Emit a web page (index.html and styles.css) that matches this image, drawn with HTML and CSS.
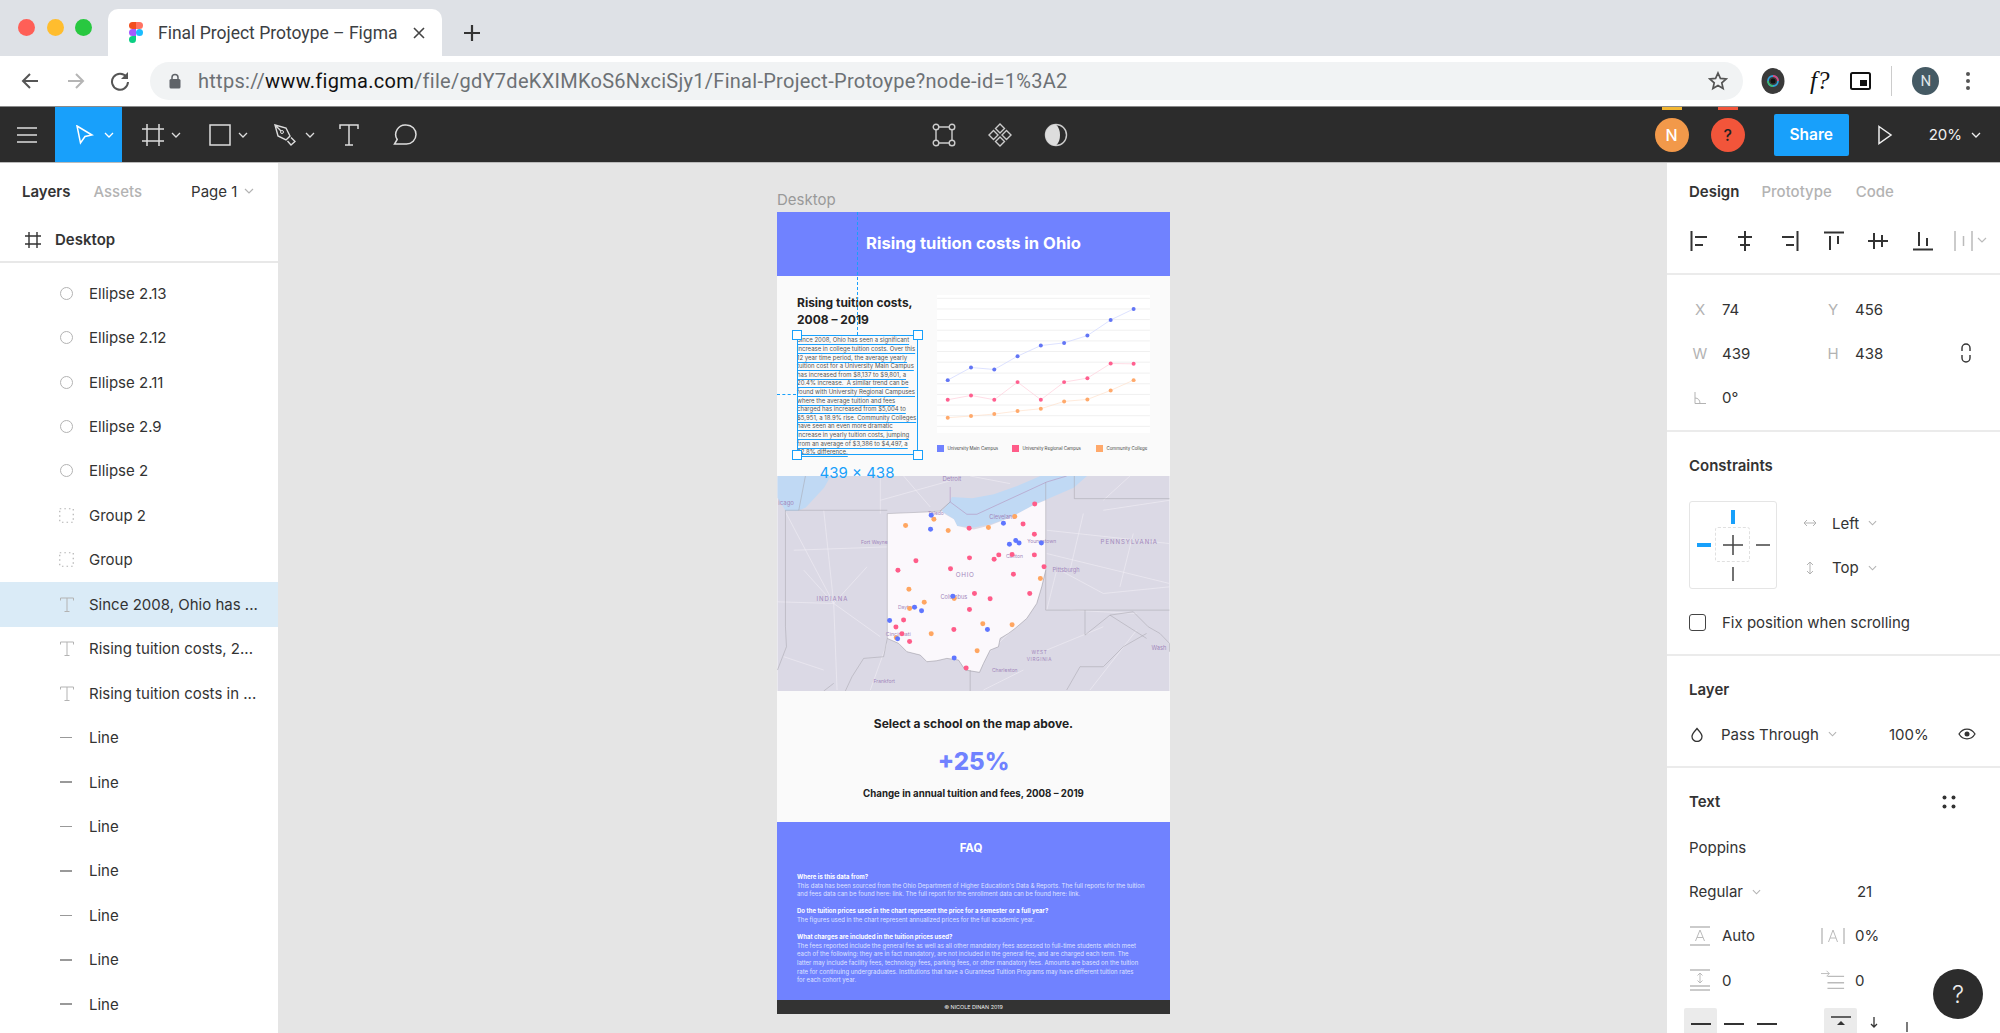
FILE: index.html
```html
<!DOCTYPE html>
<html lang="en">
<head>
<meta charset="UTF-8">
<title>Final Project Protoype – Figma</title>
<link rel="stylesheet" href="styles.css">
</head>
<body>
<div class="window">

<!-- browser tabs -->
<div class="tabstrip">
  <div class="lights"><i class="red"></i><i class="yellow"></i><i class="green"></i></div>
  <div class="tab">
    <svg class="tab-logo" width="14" height="21" viewBox="0 0 14 21">
      <path fill="#f24e1e" d="M7 0H3.5a3.5 3.5 0 0 0 0 7H7z"/><path fill="#ff7262" d="M7 0h3.5a3.5 3.5 0 0 1 0 7H7z"/>
      <path fill="#a259ff" d="M7 7H3.5a3.5 3.5 0 0 0 0 7H7z"/><circle fill="#1abcfe" cx="10.5" cy="10.5" r="3.5"/>
      <path fill="#0acf83" d="M7 14H3.5a3.5 3.5 0 1 0 3.5 3.5z"/>
    </svg>
    <span class="tab-title">Final Project Protoype – Figma</span>
    <svg class="tab-close" width="14" height="14" viewBox="0 0 14 14"><path d="M2 2l10 10M12 2L2 12" stroke="#444" stroke-width="1.6"/></svg>
  </div>
  <svg class="tab-new" width="18" height="18" viewBox="0 0 18 18"><path d="M9 1v16M1 9h16" stroke="#333" stroke-width="2.2"/></svg>
</div>

<!-- address bar -->
<div class="addressbar">
  <svg class="nav-back" width="20" height="20" viewBox="0 0 20 20"><path d="M18 10H3M10 3l-7 7 7 7" fill="none" stroke="#555" stroke-width="2"/></svg>
  <svg class="nav-forward" width="20" height="20" viewBox="0 0 20 20"><path d="M2 10h15M10 3l7 7-7 7" fill="none" stroke="#b5b5b5" stroke-width="2"/></svg>
  <svg class="nav-reload" width="20" height="20" viewBox="0 0 20 20"><path d="M16.5 6A8 8 0 1 0 18 11" fill="none" stroke="#555" stroke-width="2"/><path d="M18 1v7h-7z" fill="#555"/></svg>
  <div class="omnibox">
    <svg width="12" height="16" viewBox="0 0 12 16"><path d="M3 7V4.500a3 3 0 0 1 6 0V7" fill="none" stroke="#5f6368" stroke-width="1.5"/><rect x="0.500" y="6" width="11" height="9.500" rx="1.500" fill="#5f6368"/></svg>
    <span class="url"><span class="url-dim">https://</span>www.figma.com<span class="url-dim">/file/gdY7deKXIMKoS6NxciSjy1/Final-Project-Protoype?node-id=1%3A2</span></span>
    <svg class="star" width="20" height="20" viewBox="0 0 20 20"><path d="M10 2l2.400 5.400 5.800.6-4.400 3.900 1.300 5.700L10 14.600l-5.100 3 1.300-5.700L1.800 8l5.800-.6z" fill="none" stroke="#555" stroke-width="1.700"/></svg>
  </div>
  <svg class="ext-lens" width="24" height="28" viewBox="0 0 24 28"><ellipse cx="12" cy="14" rx="11.500" ry="13" fill="#3a3a3a"/><circle cx="12" cy="14" r="5" fill="none" stroke="#2f9fd8" stroke-width="1.800"/><path d="M12 9a5 5 0 0 1 5 5" fill="none" stroke="#e0457b" stroke-width="1.800"/><path d="M7 14a5 5 0 0 0 5 5" fill="none" stroke="#3dbb6c" stroke-width="1.800"/><circle cx="12" cy="14" r="2.500" fill="#111"/></svg>
  <span class="ext-font">f?</span>
  <svg class="ext-pip" width="21" height="18" viewBox="0 0 21 18"><rect x="1" y="1" width="19" height="16" rx="1.500" fill="none" stroke="#111" stroke-width="2"/><rect x="10" y="8" width="7" height="6" fill="#111"/></svg>
  <span class="bar-sep"></span>
  <span class="profile">N</span>
  <svg class="menu-dots" width="6" height="20" viewBox="0 0 6 20"><circle cx="3" cy="3" r="2" fill="#555"/><circle cx="3" cy="10" r="2" fill="#555"/><circle cx="3" cy="17" r="2" fill="#555"/></svg>
</div>

<!-- figma toolbar -->
<div class="toolbar">
  <div class="tools">
    <div class="tool-menu"><svg width="20" height="16" viewBox="0 0 20 16"><path d="M0 1h20M0 8h20M0 15h20" stroke="#ddd" stroke-width="1.500"/></svg></div>
    <div class="tool tool-active">
      <svg width="19" height="20" viewBox="0 0 19 20"><path d="M2 1l15 9-7 1.500L5.500 18z" fill="none" stroke="#fff" stroke-width="1.500"/></svg>
      <svg class="chev" width="10" height="6" viewBox="0 0 10 6"><path d="M1 1l4 4 4-4" fill="none" stroke="#fff" stroke-width="1.300"/></svg>
    </div>
    <div class="tool">
      <svg width="22" height="22" viewBox="0 0 22 22"><path d="M0 5h22M0 17h22M5 0v22M17 0v22" stroke="#ddd" stroke-width="1.500"/></svg>
      <svg class="chev" width="10" height="6" viewBox="0 0 10 6"><path d="M1 1l4 4 4-4" fill="none" stroke="#ddd" stroke-width="1.300"/></svg>
    </div>
    <div class="tool">
      <svg width="22" height="22" viewBox="0 0 22 22"><rect x="1" y="1" width="20" height="20" fill="none" stroke="#ddd" stroke-width="1.500"/></svg>
      <svg class="chev" width="10" height="6" viewBox="0 0 10 6"><path d="M1 1l4 4 4-4" fill="none" stroke="#ddd" stroke-width="1.300"/></svg>
    </div>
    <div class="tool tool-pen">
      <svg width="22" height="22" viewBox="0 0 22 22"><path d="M1 1l11 3 4 8-4 4-8-4zM1 1l6 6M13.500 17l3.500 4 4-3.500-4-4" fill="none" stroke="#ddd" stroke-width="1.400"/><circle cx="8" cy="8" r="1.500" fill="none" stroke="#ddd"/></svg>
      <svg class="chev" width="10" height="6" viewBox="0 0 10 6"><path d="M1 1l4 4 4-4" fill="none" stroke="#ddd" stroke-width="1.300"/></svg>
    </div>
    <div class="tool-plain">
      <svg width="20" height="22" viewBox="0 0 20 22"><path d="M1 5V1h18v4M10 1v20M6 21h8" fill="none" stroke="#ddd" stroke-width="1.500"/></svg>
    </div>
    <div class="tool-plain tool-comment">
      <svg width="24" height="22" viewBox="0 0 24 22"><path d="M13.500 1a9.500 9.500 0 0 1 0 19H1.500l2.700-4.500A9.500 9.500 0 0 1 13.500 1z" fill="none" stroke="#ddd" stroke-width="1.500"/></svg>
    </div>
  </div>
  <div class="tools-center">
    <svg width="24" height="24" viewBox="0 0 24 24"><path d="M4 4h16v16H4z" fill="none" stroke="#ccc" stroke-width="1.400"/><g fill="#2c2c2c" stroke="#ccc" stroke-width="1.400"><circle cx="4" cy="4" r="2.800"/><circle cx="20" cy="4" r="2.800"/><circle cx="4" cy="20" r="2.800"/><circle cx="20" cy="20" r="2.800"/></g></svg>
    <svg width="24" height="24" viewBox="0 0 24 24"><g fill="none" stroke="#ccc" stroke-width="1.400"><path d="M12 1l4.500 4.500L12 10 7.500 5.500z"/><path d="M12 14l4.500 4.500L12 23l-4.500-4.500z"/><path d="M5.500 7.500L10 12l-4.500 4.500L1 12z"/><path d="M18.500 7.500L23 12l-4.500 4.500L14 12z"/></g></svg>
    <svg width="24" height="24" viewBox="0 0 24 24"><circle cx="12" cy="12" r="10.500" fill="none" stroke="#ccc" stroke-width="1.400"/><path d="M12 1.500a10.500 10.500 0 0 0 0 21c3-3 4-6.500 4-10.500S15 4.500 12 1.500z" fill="#ddd"/></svg>
  </div>
  <div class="tools-right">
    <span class="avatar avatar-n">N</span>
    <span class="avatar avatar-q">?</span>
    <span class="share">Share</span>
    <svg class="play" width="16" height="20" viewBox="0 0 16 20"><path d="M2 1.500L14 10 2 18.500z" fill="none" stroke="#eee" stroke-width="1.500"/></svg>
    <span class="zoom-value">20%</span>
    <svg class="chev" width="10" height="6" viewBox="0 0 10 6"><path d="M1 1l4 4 4-4" fill="none" stroke="#eee" stroke-width="1.300"/></svg>
  </div>
</div>

<div class="workspace">

  <!-- layers panel -->
  <aside class="layers">
    <div class="layer-tabs">
      <span class="tab-on">Layers</span>
      <span class="tab-off">Assets</span>
      <span class="page-pick">Page 1</span>
      <svg width="10" height="6" viewBox="0 0 10 6"><path d="M1 1l4 4 4-4" fill="none" stroke="#b3b3b3" stroke-width="1.200"/></svg>
    </div>
    <div class="layer-frame">
      <svg width="16" height="16" viewBox="0 0 16 16"><path d="M0 4h16M0 12h16M4 0v16M12 0v16" stroke="#333" stroke-width="1.400"/></svg>
      <span>Desktop</span>
    </div>
    <ul class="layer-list">
      <li><i class="ic-ellipse"></i>Ellipse 2.13</li>
      <li><i class="ic-ellipse"></i>Ellipse 2.12</li>
      <li><i class="ic-ellipse"></i>Ellipse 2.11</li>
      <li><i class="ic-ellipse"></i>Ellipse 2.9</li>
      <li><i class="ic-ellipse"></i>Ellipse 2</li>
      <li><svg class="ic-group" width="15" height="15" viewBox="0 0 15 15"><rect x=".75" y=".75" width="13.500" height="13.500" fill="none" stroke="#b3b3b3" stroke-width="1.200" stroke-dasharray="1.500 3.100"/></svg>Group 2</li>
      <li><svg class="ic-group" width="15" height="15" viewBox="0 0 15 15"><rect x=".75" y=".75" width="13.500" height="13.500" fill="none" stroke="#b3b3b3" stroke-width="1.200" stroke-dasharray="1.500 3.100"/></svg>Group</li>
      <li class="layer-selected"><svg class="ic-text" width="14" height="15" viewBox="0 0 14 15"><path d="M.5 3.500V1h13v2.500M7 1v13.500M4.500 14.500h5" fill="none" stroke="#b3b3b3"/></svg>Since 2008, Ohio has ...</li>
      <li><svg class="ic-text" width="14" height="15" viewBox="0 0 14 15"><path d="M.5 3.500V1h13v2.500M7 1v13.500M4.500 14.500h5" fill="none" stroke="#b3b3b3"/></svg>Rising tuition costs, 2...</li>
      <li><svg class="ic-text" width="14" height="15" viewBox="0 0 14 15"><path d="M.5 3.500V1h13v2.500M7 1v13.500M4.500 14.500h5" fill="none" stroke="#b3b3b3"/></svg>Rising tuition costs in ...</li>
      <li><i class="ic-line"></i>Line</li>
      <li><i class="ic-line"></i>Line</li>
      <li><i class="ic-line"></i>Line</li>
      <li><i class="ic-line"></i>Line</li>
      <li><i class="ic-line"></i>Line</li>
      <li><i class="ic-line"></i>Line</li>
      <li><i class="ic-line"></i>Line</li>
    </ul>
  </aside>

  <!-- canvas with the frame -->
  <main class="canvas">
    <div class="frame-label">Desktop</div>
    <div class="frame">
      <header class="frame-head">Rising tuition costs in Ohio</header>

      <section class="intro">
        <div class="intro-text">
          <h2>Rising tuition costs,<br>2008 – 2019</h2>
          <p class="selected-text">
            <span><u>Since 2008, Ohio has seen a significant</u></span>
            <span><u>increase in college tuition costs. Over this</u></span>
            <span><u>12 year time period, the average yearly</u></span>
            <span><u>tuition cost for a University Main Campus</u></span>
            <span><u>has increased from $8,137 to $9,801, a</u></span>
            <span><u>20.4% increase.  A similar trend can be</u></span>
            <span><u>found with University Regional Campuses</u></span>
            <span><u>where the average tuition and fees</u></span>
            <span><u>charged has increased from $5,004 to</u></span>
            <span><u>$5,951, a 18.9% rise. Community Colleges</u></span>
            <span><u>have seen an even more dramatic</u></span>
            <span><u>increase in yearly tuition costs, jumping</u></span>
            <span><u>from an average of $3,386 to $4,497, a</u></span>
            <span><u>32.8% difference.</u></span>
          </p>
        </div>
        <div class="intro-chart">
          <svg width="213" height="138" viewBox="499 315 640 415">
            <rect x="499" y="315" width="640" height="415" fill="#fff"/>
            <path d="M499 325H1139M499 357H1139M499 389H1139M499 421H1139M499 453H1139M499 485H1139M499 517H1139M499 550H1139M499 582H1139M499 614H1139M499 646H1139M499 678H1139M499 710H1139" stroke="#f0f0f0" stroke-width="3"/>
            <polyline fill="none" stroke="#ccd3ff" stroke-width="2" points="531,571 601,533 671,539 741,499 811,467 881,459 951,437 1021,390 1090,357"/>
            <polyline fill="none" stroke="#ffcbd9" stroke-width="2" points="531,630 601,617 671,630 741,577 811,630 881,577 951,565 1021,521 1090,522"/>
            <polyline fill="none" stroke="#ffe0c8" stroke-width="2" points="531,684 601,679 671,673 741,664 811,657 881,635 951,629 1021,602 1090,571"/>
            <g fill="#6275f5"><circle cx="531" cy="571" r="6"/><circle cx="601" cy="533" r="6"/><circle cx="671" cy="539" r="6"/><circle cx="741" cy="499" r="6"/><circle cx="811" cy="467" r="6"/><circle cx="881" cy="459" r="6"/><circle cx="951" cy="437" r="6"/><circle cx="1021" cy="390" r="6"/><circle cx="1090" cy="357" r="6"/></g>
            <g fill="#ff5f8f"><circle cx="531" cy="630" r="6"/><circle cx="601" cy="617" r="6"/><circle cx="671" cy="630" r="6"/><circle cx="741" cy="577" r="6"/><circle cx="811" cy="630" r="6"/><circle cx="881" cy="577" r="6"/><circle cx="951" cy="565" r="6"/><circle cx="1021" cy="521" r="6"/><circle cx="1090" cy="522" r="6"/></g>
            <g fill="#ffa96b"><circle cx="531" cy="684" r="6"/><circle cx="601" cy="679" r="6"/><circle cx="671" cy="673" r="6"/><circle cx="741" cy="664" r="6"/><circle cx="811" cy="657" r="6"/><circle cx="881" cy="635" r="6"/><circle cx="951" cy="629" r="6"/><circle cx="1021" cy="602" r="6"/><circle cx="1090" cy="571" r="6"/></g>
          </svg>
          <div class="legend">
            <span class="legend-item legend-main"><i></i>University Main Campus</span>
            <span class="legend-item legend-regional"><i></i>University Regional Campus</span>
            <span class="legend-item legend-college"><i></i>Community College</span>
          </div>
        </div>
      </section>

      <section class="map">
        <svg width="393" height="215" viewBox="21 17 1178 646">
          <rect x="21" y="17" width="1178" height="646" fill="#dbd9e5"/>
          <!-- lakes -->
          <path fill="#c0d9f4" d="M21 17H181L161 52 106 112 81 122 46 122 21 82z"/>
          <path fill="#c0d9f4" d="M505 132L536 98 545 80 606 84 671 72 741 47 811 17H951L911 52 831 87 791 104 721 142 661 162 611 172 561 167 551 147 521 127z"/>
          <!-- roads -->
          <g fill="none" stroke="#eeecf3" stroke-width="2">
            <path d="M45 125L190 400 330 500M190 400L200 660M190 400L21 395M70 240L350 230M330 17V130M160 120L190 400M100 300L190 400M190 400L290 290"/>
            <path d="M830 250L1199 340M870 300L1000 370 1199 350M860 300L830 420M1000 120L1199 90M830 180L1199 220M900 420L1100 430M1080 17L1000 90M900 300L940 130M1050 350L1090 190"/>
            <path d="M600 600L780 430M830 540L1000 470M640 660L760 600M960 660L1100 480M300 660L350 520M600 17L720 40M545 30L330 90M400 17L480 110M40 560L160 600"/>
          </g>
          <!-- Ohio -->
          <path fill="#fbf8fc" d="M351 130L470 125 515 122 525 132 551 147 561 167 611 178 661 165 721 142 791 104 827 90V300L815 350 800 400 770 445 735 475 715 490 690 505 685 530 660 540 640 580 628 607 585 600 565 570 530 565 500 572 470 575 450 555 410 545 385 520 351 505z"/>
          <path fill="none" stroke="#8e8c96" stroke-width="1.500" d="M351 505L385 520 410 545 450 555 470 575 500 572 530 565 565 570 585 600 628 607 640 580 660 540 685 530 690 505 715 490 735 475 770 445 800 400 815 350 827 300"/>
          <!-- state lines -->
          <g fill="none" stroke="#a3a1ab" stroke-width="1.500">
            <path d="M351 130L470 125 515 122M351 130V505L340 560 280 565 245 620 225 663M45 120H351M45 120V470L48 530 21 600"/>
            <path d="M827 35V420H1199M913 17V85H1199M945 420V495L1020 435 1090 425 1135 470 1170 490 1199 520M1020 435L1130 505M1199 520V545M890 660L930 590 1000 590 1060 530 1130 490M600 600V663M105 17L85 120M160 663L190 640"/>
          </g>
          <path fill="none" stroke="#b59ac2" stroke-width="2" d="M540 50V95L590 132H620L830 35 890 17"/>
          <path fill="none" stroke="#8e8c96" stroke-width="1.500" d="M510 122L540 95"/>
          <!-- labels -->
          <g class="map-label">
            <text x="545" y="33" text-anchor="middle" font-size="18">Detroit</text>
            <text x="47" y="104" text-anchor="middle" font-size="18">icago</text>
            <text x="497" y="133" text-anchor="middle" font-size="15">Toledo</text>
            <text x="312" y="222" text-anchor="middle" font-size="15">Fort Wayne</text>
            <text x="697" y="147" text-anchor="middle" font-size="17">Cleveland</text>
            <text x="815" y="219" text-anchor="middle" font-size="15">Youngstown</text>
            <text x="733" y="264" text-anchor="middle" font-size="15">Canton</text>
            <text x="888" y="304" text-anchor="middle" font-size="17">Pittsburgh</text>
            <text x="551" y="387" text-anchor="middle" font-size="17">Columbus</text>
            <text x="408" y="416" text-anchor="middle" font-size="15">Dayton</text>
            <text x="384" y="498" text-anchor="middle" font-size="16">Cincinnati</text>
            <text x="704" y="606" text-anchor="middle" font-size="15">Charleston</text>
            <text x="342" y="640" text-anchor="middle" font-size="15">Frankfort</text>
            <text x="1145" y="541" font-size="17">Wash</text>
            <text x="585" y="320" text-anchor="middle" font-size="19" letter-spacing="2">OHIO</text>
            <text x="186" y="393" text-anchor="middle" font-size="18" letter-spacing="3">INDIANA</text>
            <text x="1078" y="220" text-anchor="middle" font-size="18" letter-spacing="3">PENNSYLVANIA</text>
            <text x="808" y="552" text-anchor="middle" font-size="14" letter-spacing="2">WEST</text>
            <text x="808" y="574" text-anchor="middle" font-size="14" letter-spacing="2">VIRGINIA</text>
          </g>
          <!-- schools -->
          <g fill="#ffa661"><circle cx="491" cy="147" r="7.500"/><circle cx="406" cy="166" r="7.500"/><circle cx="534" cy="181" r="7.500"/><circle cx="655" cy="172" r="7.500"/><circle cx="734" cy="139" r="7.500"/><circle cx="811" cy="325" r="7.500"/><circle cx="416" cy="357" r="7.500"/><circle cx="462" cy="396" r="7.500"/><circle cx="418" cy="415" r="7.500"/><circle cx="552" cy="385" r="7.500"/><circle cx="638" cy="461" r="7.500"/><circle cx="726" cy="464" r="7.500"/><circle cx="483" cy="491" r="7.500"/><circle cx="378" cy="503" r="7.500"/><circle cx="621" cy="542" r="7.500"/></g>
          <g fill="#ff5c89"><circle cx="794" cy="101" r="7.500"/><circle cx="759" cy="161" r="7.500"/><circle cx="793" cy="192" r="7.500"/><circle cx="597" cy="174" r="7.500"/><circle cx="598" cy="263" r="7.500"/><circle cx="672" cy="267" r="7.500"/><circle cx="686" cy="254" r="7.500"/><circle cx="726" cy="253" r="7.500"/><circle cx="793" cy="254" r="7.500"/><circle cx="822" cy="290" r="7.500"/><circle cx="730" cy="312" r="7.500"/><circle cx="437" cy="272" r="7.500"/><circle cx="383" cy="300" r="7.500"/><circle cx="541" cy="296" r="7.500"/><circle cx="613" cy="370" r="7.500"/><circle cx="660" cy="386" r="7.500"/><circle cx="779" cy="370" r="7.500"/><circle cx="598" cy="418" r="7.500"/><circle cx="400" cy="450" r="7.500"/><circle cx="377" cy="471" r="7.500"/><circle cx="395" cy="491" r="7.500"/><circle cx="418" cy="514" r="7.500"/><circle cx="551" cy="478" r="7.500"/><circle cx="588" cy="594" r="7.500"/></g>
          <g fill="#5f76ff"><circle cx="483" cy="135" r="7.500"/><circle cx="481" cy="177" r="7.500"/><circle cx="700" cy="159" r="7.500"/><circle cx="718" cy="222" r="7.500"/><circle cx="737" cy="211" r="7.500"/><circle cx="747" cy="218" r="7.500"/><circle cx="814" cy="218" r="7.500"/><circle cx="548" cy="378" r="7.500"/><circle cx="433" cy="411" r="7.500"/><circle cx="454" cy="422" r="7.500"/><circle cx="358" cy="451" r="7.500"/><circle cx="382" cy="506" r="7.500"/><circle cx="652" cy="478" r="7.500"/><circle cx="552" cy="564" r="7.500"/></g>
        </svg>
      </section>

      <section class="stat">
        <div class="stat-prompt">Select a school on the map above.</div>
        <div class="stat-value">+25%</div>
        <div class="stat-caption">Change in annual tuition and fees, 2008 – 2019</div>
      </section>

      <section class="faq">
        <h3>FAQ</h3>
        <p><b>Where is this data from?</b><br>This data has been sourced from the Ohio Department of Higher Education's Data &amp; Reports. The full reports for the tuition<br>and fees data can be found here:  link. The full report for the enrollment data can be found here: link.</p>
        <p><b>Do the tuition prices used in the chart represent the price for a semester or a full year?</b><br>The figures used in the chart represent annualized prices for the full academic year.</p>
        <p><b>What charges are included in the tuition prices used?</b><br>The fees reported include the general fee as well as all other mandatory fees assessed to full-time students which meet<br>each of the following: they are in fact mandatory, are not included in the general fee, and are charged each term. The<br>latter may include facility fees, technology fees, parking fees, or other mandatory fees. Amounts are based on the tuition<br>rate for continuing undergraduates. Institutions that have a Guranteed Tuition Programs may have different tuition rates<br>for each cohort year.</p>
      </section>

      <footer class="frame-foot">© NICOLE DINAN 2019</footer>

      <!-- selection drawn by the editor -->
      <div class="guide-v"></div>
      <div class="guide-h"></div>
      <div class="sel-box">
        <i class="handle handle-tl"></i><i class="handle handle-tr"></i><i class="handle handle-bl"></i><i class="handle handle-br"></i>
      </div>
      <div class="sel-size">439 × 438</div>
    </div>
  </main>

  <!-- design panel -->
  <aside class="design">
    <div class="design-tabs"><span class="tab-on">Design</span><span class="tab-off">Prototype</span><span class="tab-off">Code</span></div>
    <div class="align-row">
      <svg width="20" height="20" viewBox="0 0 20 20"><path d="M1.500 0v20M5 6h12M5 14h8" stroke="#333" stroke-width="2" fill="none"/></svg>
      <svg width="20" height="20" viewBox="0 0 20 20"><path d="M10 0v20M3 6h14M5 14h10" stroke="#333" stroke-width="2" fill="none"/></svg>
      <svg width="20" height="20" viewBox="0 0 20 20"><path d="M18.500 0v20M3 6h12M7 14h8" stroke="#333" stroke-width="2" fill="none"/></svg>
      <svg width="20" height="20" viewBox="0 0 20 20"><path d="M0 1.500h20M6 5v14M14 5v8" stroke="#333" stroke-width="2" fill="none"/></svg>
      <svg width="20" height="20" viewBox="0 0 20 20"><path d="M0 10h20M6 2v16M14 4v12" stroke="#333" stroke-width="2" fill="none"/></svg>
      <svg width="20" height="20" viewBox="0 0 20 20"><path d="M0 18.500h20M6 1v14M14 7v8" stroke="#333" stroke-width="2" fill="none"/></svg>
      <svg class="align-dist" width="34" height="20" viewBox="0 0 34 20"><path d="M1 0v20M18 0v20M9.500 5v10" stroke="#bbb" stroke-width="1.500" fill="none"/><path d="M24 7l4 4 4-4" stroke="#bbb" stroke-width="1.200" fill="none"/></svg>
    </div>

    <div class="section fields">
      <div class="field-row"><span class="f-label">X</span><span class="f-value">74</span><span class="f-label">Y</span><span class="f-value">456</span></div>
      <div class="field-row"><span class="f-label">W</span><span class="f-value">439</span><span class="f-label">H</span><span class="f-value">438</span>
        <svg class="link-icon" width="10" height="20" viewBox="0 0 10 20"><path d="M1 8V5a4 4 0 0 1 8 0v3M1 12v3a4 4 0 0 0 8 0v-3" fill="none" stroke="#333" stroke-width="1.400"/></svg></div>
      <div class="field-row"><span class="f-label"><svg width="12" height="12" viewBox="0 0 12 12"><path d="M1 0v11.500h11M1 6c3 0 5 2 5 5.500" fill="none" stroke="#b3b3b3"/></svg></span><span class="f-value">0°</span></div>
    </div>

    <div class="section constraints">
      <div class="section-title">Constraints</div>
      <div class="constraint-body">
        <div class="constraint-box">
          <div class="constraint-inner"></div>
          <svg width="86" height="86" viewBox="0 0 86 86"><path d="M43 8v14M7 43h14" stroke="#18a0fb" stroke-width="4"/><path d="M66 43h14M43 65v14M43 33v20M33 43h20" stroke="#444" stroke-width="1.500"/></svg>
        </div>
        <div class="constraint-picks">
          <div class="pick"><svg width="14" height="10" viewBox="0 0 14 10"><path d="M1 5h12M4 2L1 5l3 3M10 2l3 3-3 3" fill="none" stroke="#b3b3b3"/></svg><span>Left</span><svg width="9" height="6" viewBox="0 0 10 6"><path d="M1 1l4 4 4-4" fill="none" stroke="#b3b3b3" stroke-width="1.200"/></svg></div>
          <div class="pick"><svg width="14" height="14" viewBox="0 0 14 14"><path d="M7 1v12M4 4l3-3 3 3M4 10l3 3 3-3" fill="none" stroke="#b3b3b3"/></svg><span>Top</span><svg width="9" height="6" viewBox="0 0 10 6"><path d="M1 1l4 4 4-4" fill="none" stroke="#b3b3b3" stroke-width="1.200"/></svg></div>
        </div>
      </div>
      <div class="fix-row"><i class="checkbox"></i>Fix position when scrolling</div>
    </div>

    <div class="section layer-blend">
      <div class="section-title">Layer</div>
      <div class="blend-row">
        <svg width="12" height="15" viewBox="0 0 12 15"><path d="M6 1.500C8 4 11 6.500 11 9.500a5 5 0 0 1-10 0C1 6.500 4 4 6 1.500z" fill="none" stroke="#333" stroke-width="1.300"/></svg>
        <span class="blend-name">Pass Through</span>
        <svg width="9" height="6" viewBox="0 0 10 6"><path d="M1 1l4 4 4-4" fill="none" stroke="#b3b3b3" stroke-width="1.200"/></svg>
        <span class="blend-pct">100%</span>
        <svg class="eye" width="18" height="12" viewBox="0 0 18 12"><path d="M1 6c4-6.500 12-6.500 16 0-4 6.500-12 6.500-16 0z" fill="none" stroke="#333" stroke-width="1.300"/><circle cx="9" cy="6" r="2.500" fill="#333"/></svg>
      </div>
    </div>

    <div class="section text-props">
      <div class="section-title title-dots">Text
        <svg width="14" height="14" viewBox="0 0 14 14"><g fill="#333"><circle cx="2.500" cy="2.500" r="2"/><circle cx="11.500" cy="2.500" r="2"/><circle cx="2.500" cy="11.500" r="2"/><circle cx="11.500" cy="11.500" r="2"/></g></svg>
      </div>
      <div class="text-line">Poppins</div>
      <div class="text-line weight-row"><span>Regular</span><svg width="9" height="6" viewBox="0 0 10 6"><path d="M1 1l4 4 4-4" fill="none" stroke="#b3b3b3" stroke-width="1.200"/></svg><span class="size-value">21</span></div>
      <div class="field-row field-tight">
        <span class="f-label"><svg width="20" height="20" viewBox="0 0 20 20"><path d="M0 1h20M0 19h20" stroke="#bbb" stroke-width="1.400"/><path d="M5.500 15L10 4l4.500 11M7 11.500h6" fill="none" stroke="#bbb"/></svg></span><span class="f-value">Auto</span>
        <span class="f-label"><svg width="24" height="16" viewBox="0 0 24 16"><path d="M1 0v16M23 0v16" stroke="#bbb" stroke-width="1.400"/><path d="M7.500 14L12 2l4.500 12M9 10h6" fill="none" stroke="#bbb"/></svg></span><span class="f-value">0%</span>
      </div>
      <div class="field-row field-tight">
        <span class="f-label"><svg width="20" height="22" viewBox="0 0 20 22"><path d="M0 1h20M0 17h20M0 21h20" stroke="#bbb" stroke-width="1.400"/><path d="M10 4v10M7.500 6.500L10 4l2.500 2.500M7.500 11.500L10 14l2.500-2.500" fill="none" stroke="#bbb"/></svg></span><span class="f-value">0</span>
        <span class="f-label"><svg width="26" height="20" viewBox="0 0 26 20"><path d="M7 6h18M7 13h18M7 19h18" stroke="#bbb" stroke-width="1.400"/><path d="M0 3h9M6 0l3 3-3 3" fill="none" stroke="#bbb"/></svg></span><span class="f-value">0</span>
      </div>
      <div class="text-align-row">
        <span class="align-btn align-on"><i></i></span><span class="align-btn"><i></i></span><span class="align-btn"><i></i></span>
        <span class="align-btn align-on align-v"><svg width="20" height="16" viewBox="0 0 20 16"><path d="M0 1h20" stroke="#333" stroke-width="1.500"/><path d="M10 5l-4 4h8z" fill="#333"/></svg></span>
        <span class="align-btn align-v"><svg width="12" height="16" viewBox="0 0 12 16"><path d="M6 1v10M3 8l3 3 3-3" fill="none" stroke="#333" stroke-width="1.300"/></svg></span>
        <span class="align-btn align-v"><svg width="6" height="16" viewBox="0 0 6 16"><path d="M3 6v10" stroke="#333" stroke-width="1.300"/></svg></span>
      </div>
    </div>

    <div class="help">?</div>
  </aside>
</div>

</div>
</body>
</html>
```

FILE: styles.css
```css
* { box-sizing: border-box; }

html, body { margin: 0; padding: 0; height: 100%; }

body {
  font-family: Inter, "Liberation Sans", sans-serif;
  color: #333;
  overflow: hidden;
}

.window {
  width: 2000px;
  height: 1033px;
  display: flex;
  flex-direction: column;
  overflow: hidden;
}

/* browser chrome */

.tabstrip {
  height: 56px;
  flex: none;
  background: #dee1e6;
  display: flex;
  align-items: flex-end;
}
.lights {
  display: flex;
  gap: 11.5px;
  padding: 0 0 20px 18px;
  width: 108px;
}
.lights i { width: 17px; height: 17px; border-radius: 50%; }
.lights .red { background: #ff5f57; }
.lights .yellow { background: #ffbd2e; }
.lights .green { background: #28c840; }

.tab {
  width: 334px;
  height: 47px;
  background: #fff;
  border-radius: 10px 10px 0 0;
  display: flex;
  align-items: center;
  padding-left: 21px;
}
.tab-logo { margin-right: 15px; }
.tab-title {
  font-family: Roboto, sans-serif;
  font-size: 17.5px;
  color: #3c4043;
  width: 254px;
  white-space: nowrap;
}
.tab-new { margin: 0 0 14px 21px; }

.addressbar {
  height: 51px;
  flex: none;
  background: #fff;
  border-bottom: 1px solid #8a8a8a;
  display: flex;
  align-items: center;
}
.nav-back { margin-left: 20px; }
.nav-forward { margin-left: 26px; }
.nav-reload { margin-left: 24px; }
.omnibox {
  width: 1593px;
  height: 38px;
  margin-left: 20px;
  border-radius: 19px;
  background: #f1f3f4;
  display: flex;
  align-items: center;
  padding-left: 19px;
}
.url {
  font-family: Roboto, sans-serif;
  font-size: 20px;
  letter-spacing: 0.28px;
  color: #111;
  margin-left: 17px;
  white-space: nowrap;
}
.url-dim { color: #6d7175; }
.star { margin-left: auto; margin-right: 15px; }
.ext-lens { margin-left: 18px; }
.ext-font {
  font-family: "Liberation Serif", serif;
  font-style: italic;
  font-size: 25px;
  color: #111;
  margin-left: 25px;
}
.ext-pip { margin-left: 21px; }
.bar-sep { width: 1px; height: 30px; background: #ccc; margin-left: 20px; }
.profile {
  width: 27px;
  height: 28px;
  border-radius: 50%;
  background: #455a64;
  color: #dfe5e8;
  font-family: Roboto, sans-serif;
  font-size: 15px;
  display: flex;
  align-items: center;
  justify-content: center;
  margin-left: 20px;
}
.menu-dots { margin-left: 26px; }

/* figma toolbar */

.toolbar {
  height: 56px;
  flex: none;
  background: #2c2c2c;
  border-bottom: 1px solid #bbb;
  display: flex;
  align-items: stretch;
  position: relative;
}
.tools { flex: 1 1 0; display: flex; align-items: stretch; }
.tool-menu { width: 55px; display: flex; align-items: center; justify-content: center; padding-right: 1px; }
.tool {
  width: 67px;
  display: flex;
  align-items: center;
  padding-left: 20px;
}
.tool .chev { margin-left: 7px; }
.tool-active { background: #18a0fb; }
.tool-active .chev { margin-left: 10px; }
.tool-pen { padding-left: 18px; }
.tool-pen .chev { margin-left: 9px; }
.tool-plain { width: 52px; display: flex; align-items: center; justify-content: center; }
.tool-comment { padding-left: 8px; }

.tools-center {
  display: flex;
  align-items: center;
  gap: 32px;
}

.tools-right {
  flex: 1 1 0;
  display: flex;
  align-items: center;
  justify-content: flex-end;
}
.avatar {
  width: 34px;
  height: 34px;
  border-radius: 50%;
  display: flex;
  align-items: center;
  justify-content: center;
  font-size: 16px;
  font-weight: 500;
  position: relative;
}
.avatar::before {
  content: "";
  position: absolute;
  top: -11px;
  left: 7px;
  width: 20px;
  height: 3px;
}
.avatar-n { background: #f2994a; color: #fff; }
.avatar-n::before { background: #f2b632; }
.avatar-q { background: #f2553a; color: #222; margin-left: 22px; }
.avatar-q::before { background: #f2553a; }
.share {
  width: 75px;
  height: 42px;
  background: #18a0fb;
  border-radius: 2px;
  color: #fff;
  font-size: 15.5px;
  font-weight: 600;
  display: flex;
  align-items: center;
  justify-content: center;
  margin-left: 29px;
}
.play { margin-left: 28px; }
.zoom-value { color: #f0f0f0; font-size: 15px; margin-left: 36px; }
.tools-right .chev { margin: 0 19px 0 9px; }

/* panels */

.workspace { flex: 1; min-height: 0; display: flex; }

.tab-on { font-size: 15px; font-weight: 600; color: #333; }
.tab-off { font-size: 15px; font-weight: 500; color: #b3b3b3; }

.layers {
  width: 278px;
  flex: none;
  background: #fff;
  overflow: hidden;
}
.layer-tabs {
  height: 56px;
  display: flex;
  align-items: center;
  padding-left: 22px;
}
.layer-tabs .tab-off { margin-left: 23px; }
.layer-tabs .page-pick { font-size: 15px; color: #333; margin-left: 49px; margin-right: 7px; }
.layer-frame {
  height: 44px;
  border-bottom: 2px solid #e8e8e8;
  display: flex;
  align-items: center;
  padding: 0 0 1px 25px;
  font-size: 15px;
  font-weight: 600;
  gap: 14px;
}
.layer-list {
  list-style: none;
  margin: 8px 0 0;
  padding: 0;
}
.layer-list li {
  height: 44.44px;
  display: flex;
  align-items: center;
  font-size: 15px;
  color: #333;
  padding-left: 59px;
  white-space: nowrap;
}
.layer-list .layer-selected { background: #daebf7; }
.ic-text { flex: none; margin: 0 15px 0 1px; }
.ic-ellipse {
  flex: none;
  width: 13px;
  height: 13px;
  margin: 0 16px 0 1px;
  border: 1.5px solid #b3b3b3;
  border-radius: 50%;
}
.ic-group { flex: none; margin-right: 15px; }
.ic-line {
  flex: none;
  width: 12px;
  height: 1.5px;
  margin: 0 17px 0 1px;
  background: #999;
}

/* canvas */

.canvas {
  flex: 1;
  min-width: 0;
  background: #e5e5e5;
  padding: 28px 0 0 499px;
  overflow: hidden;
}
.frame-label {
  font-size: 15px;
  line-height: 18px;
  margin-bottom: 3px;
  color: #999;
}
.frame {
  width: 393px;
  position: relative;
  background: #fafafa;
}
.frame-head {
  height: 64px;
  background: #7082ff;
  color: #fff;
  font-size: 16.6px;
  font-weight: 700;
  display: flex;
  align-items: center;
  justify-content: center;
  padding-bottom: 2px;
}

.intro {
  height: 200px;
  display: flex;
  padding: 19px 0 0 20px;
  background: #fafafa;
}
.intro-text { width: 139.5px; flex: none; }
.intro-text h2 {
  margin: 0 0 8px;
  font-size: 12px;
  line-height: 16.7px;
  font-weight: 700;
  color: #222;
}
.selected-text { margin: 0; font-size: 6px; line-height: 8.6px; color: #555; }
.selected-text span { display: block; white-space: pre; }
.selected-text u {
  text-decoration: underline;
  text-decoration-color: #18a0fb;
  text-decoration-thickness: 1px;
  text-underline-offset: 1.5px;
}
.intro-chart svg { display: block; }
.legend {
  display: flex;
  margin-top: 12px;
  font-size: 4.4px;
  line-height: 7px;
  color: #444;
}
.legend-item { display: flex; align-items: center; gap: 4px; white-space: nowrap; }
.legend-item i { width: 7px; height: 7px; }
.legend-main { width: 75px; }
.legend-regional { width: 84px; }
.legend-main i { background: #7082ff; }
.legend-regional i { background: #ff5c89; }
.legend-college i { background: #ffa96b; }

.map { height: 215px; }
.map svg { display: block; }
.map-label { fill: #a287bb; }

.stat {
  height: 131px;
  background: #fafafa;
  text-align: center;
  padding-top: 24px;
  color: #222;
}
.stat-prompt { font-size: 12px; line-height: 18px; font-weight: 700; }
.stat-value {
  font-size: 24px;
  line-height: 30px;
  font-weight: 800;
  color: #7082ff;
  margin-top: 14px;
}
.stat-caption { font-size: 9.7px; line-height: 14px; font-weight: 700; margin-top: 10px; }

.faq {
  height: 178px;
  background: #7082ff;
  color: #dfe3ff;
  padding: 17px 20px 0;
  font-size: 6px;
  line-height: 8.6px;
}
.faq h3 {
  margin: 0 0 16px;
  padding-right: 5px;
  text-align: center;
  font-size: 11.5px;
  line-height: 18px;
  font-weight: 700;
  color: #fff;
}
.faq p { margin: 0 0 8.6px; white-space: nowrap; }
.faq b { color: #fff; font-weight: 700; }

.frame-foot {
  height: 14px;
  background: #333;
  color: #eee;
  text-align: center;
  font-size: 5.4px;
  line-height: 14px;
}

/* selection drawn on top of the frame */

.guide-v {
  position: absolute;
  left: 79.5px;
  top: 0;
  height: 123px;
  border-left: 1.5px dashed #18a0fb;
}
.guide-h {
  position: absolute;
  left: 0;
  top: 182px;
  width: 19px;
  border-top: 1.5px dashed #18a0fb;
}
.sel-box {
  position: absolute;
  left: 19.5px;
  top: 123px;
  width: 121px;
  height: 120px;
  border: 1.5px solid #18a0fb;
}
.handle {
  position: absolute;
  width: 10px;
  height: 10px;
  background: #fff;
  border: 1.5px solid #18a0fb;
}
.handle-tl { left: -6px; top: -6px; }
.handle-tr { right: -6px; top: -6px; }
.handle-bl { left: -6px; bottom: -6px; }
.handle-br { right: -6px; bottom: -6px; }
.sel-size {
  position: absolute;
  left: 0;
  top: 251px;
  width: 160px;
  text-align: center;
  font-size: 15px;
  line-height: 20px;
  color: #18a0fb;
}

/* design panel */

.design {
  width: 333px;
  flex: none;
  background: #fff;
  position: relative;
  overflow: hidden;
  font-size: 15px;
  color: #333;
}
.design-tabs {
  height: 56px;
  display: flex;
  align-items: center;
  gap: 22px;
  padding-left: 22px;
}
.design-tabs .tab-off + .tab-off { margin-left: 2px; }
.align-row {
  height: 56px;
  border-bottom: 2px solid #ebebeb;
  display: flex;
  align-items: center;
  gap: 24.6px;
  padding: 0 0 10px 23px;
}
.align-dist { margin-left: -4px; }

.section { border-bottom: 2px solid #ebebeb; }
.section-title {
  font-weight: 600;
  line-height: 20px;
}

.fields { height: 157px; padding-top: 12px; }
.field-row {
  height: 44.4px;
  display: grid;
  grid-template-columns: 34px 99px 34px 1fr;
  align-items: center;
  padding-left: 21px;
  position: relative;
}
.f-label {
  width: 24px;
  text-align: center;
  color: #b3b3b3;
  display: flex;
  justify-content: center;
  align-items: center;
}
.link-icon { position: absolute; left: 294px; top: 12px; }

.constraints { height: 224px; padding: 24px 22px 0; }
.constraint-body { display: flex; margin-top: 25px; }
.constraint-box {
  width: 88px;
  height: 88px;
  border: 1.5px solid #e5e5e5;
  border-radius: 3px;
  position: relative;
}
.constraint-box svg { display: block; }
.constraint-inner {
  position: absolute;
  left: 25px;
  top: 25px;
  width: 35px;
  height: 35px;
  border: 1.5px dashed #e0e0e0;
  border-radius: 3px;
}
.constraint-picks { margin-left: 26px; }
.pick {
  height: 44.4px;
  display: flex;
  align-items: center;
}
.pick span { margin: 0 9px 0 15px; }
.fix-row { display: flex; align-items: center; margin-top: 22px; line-height: 22px; gap: 16px; }
.checkbox {
  width: 17px;
  height: 17px;
  border: 1.5px solid #444;
  border-radius: 3px;
}

.layer-blend { height: 112px; padding: 24px 22px 0; }
.blend-row { display: flex; align-items: center; margin-top: 24px; height: 20px; padding-left: 2px; }
.blend-name { margin: 0 9px 0 18px; }
.blend-pct { margin-left: 52px; }
.eye { margin-left: 29px; }

.text-props { border-bottom: 0; padding: 24px 22px 0; }
.title-dots { display: flex; justify-content: space-between; align-items: center; padding-right: 22px; }
.text-line { height: 44.4px; display: flex; align-items: center; }
.text-props .text-line:nth-of-type(2) { margin-top: 13px; }
.weight-row span:first-child { margin-right: 9px; }
.size-value { margin-left: 96px; }
.field-tight { margin-left: -22px; }
.text-align-row { display: flex; margin-left: -5px; height: 44px; padding-top: 5px; }
.align-btn {
  width: 33px;
  height: 33px;
  border-radius: 2px;
  display: flex;
  align-items: center;
  justify-content: center;
}
.align-btn i { width: 20px; height: 1.5px; background: #333; }
.align-on { background: #ebebeb; }
.align-on.align-v { margin-left: 41px; }

.help {
  position: absolute;
  left: 266px;
  bottom: 14px;
  width: 50px;
  height: 50px;
  border-radius: 50%;
  background: #2c2c2c;
  color: #eee;
  font-size: 24px;
  font-weight: 300;
  display: flex;
  align-items: center;
  justify-content: center;
}
```
